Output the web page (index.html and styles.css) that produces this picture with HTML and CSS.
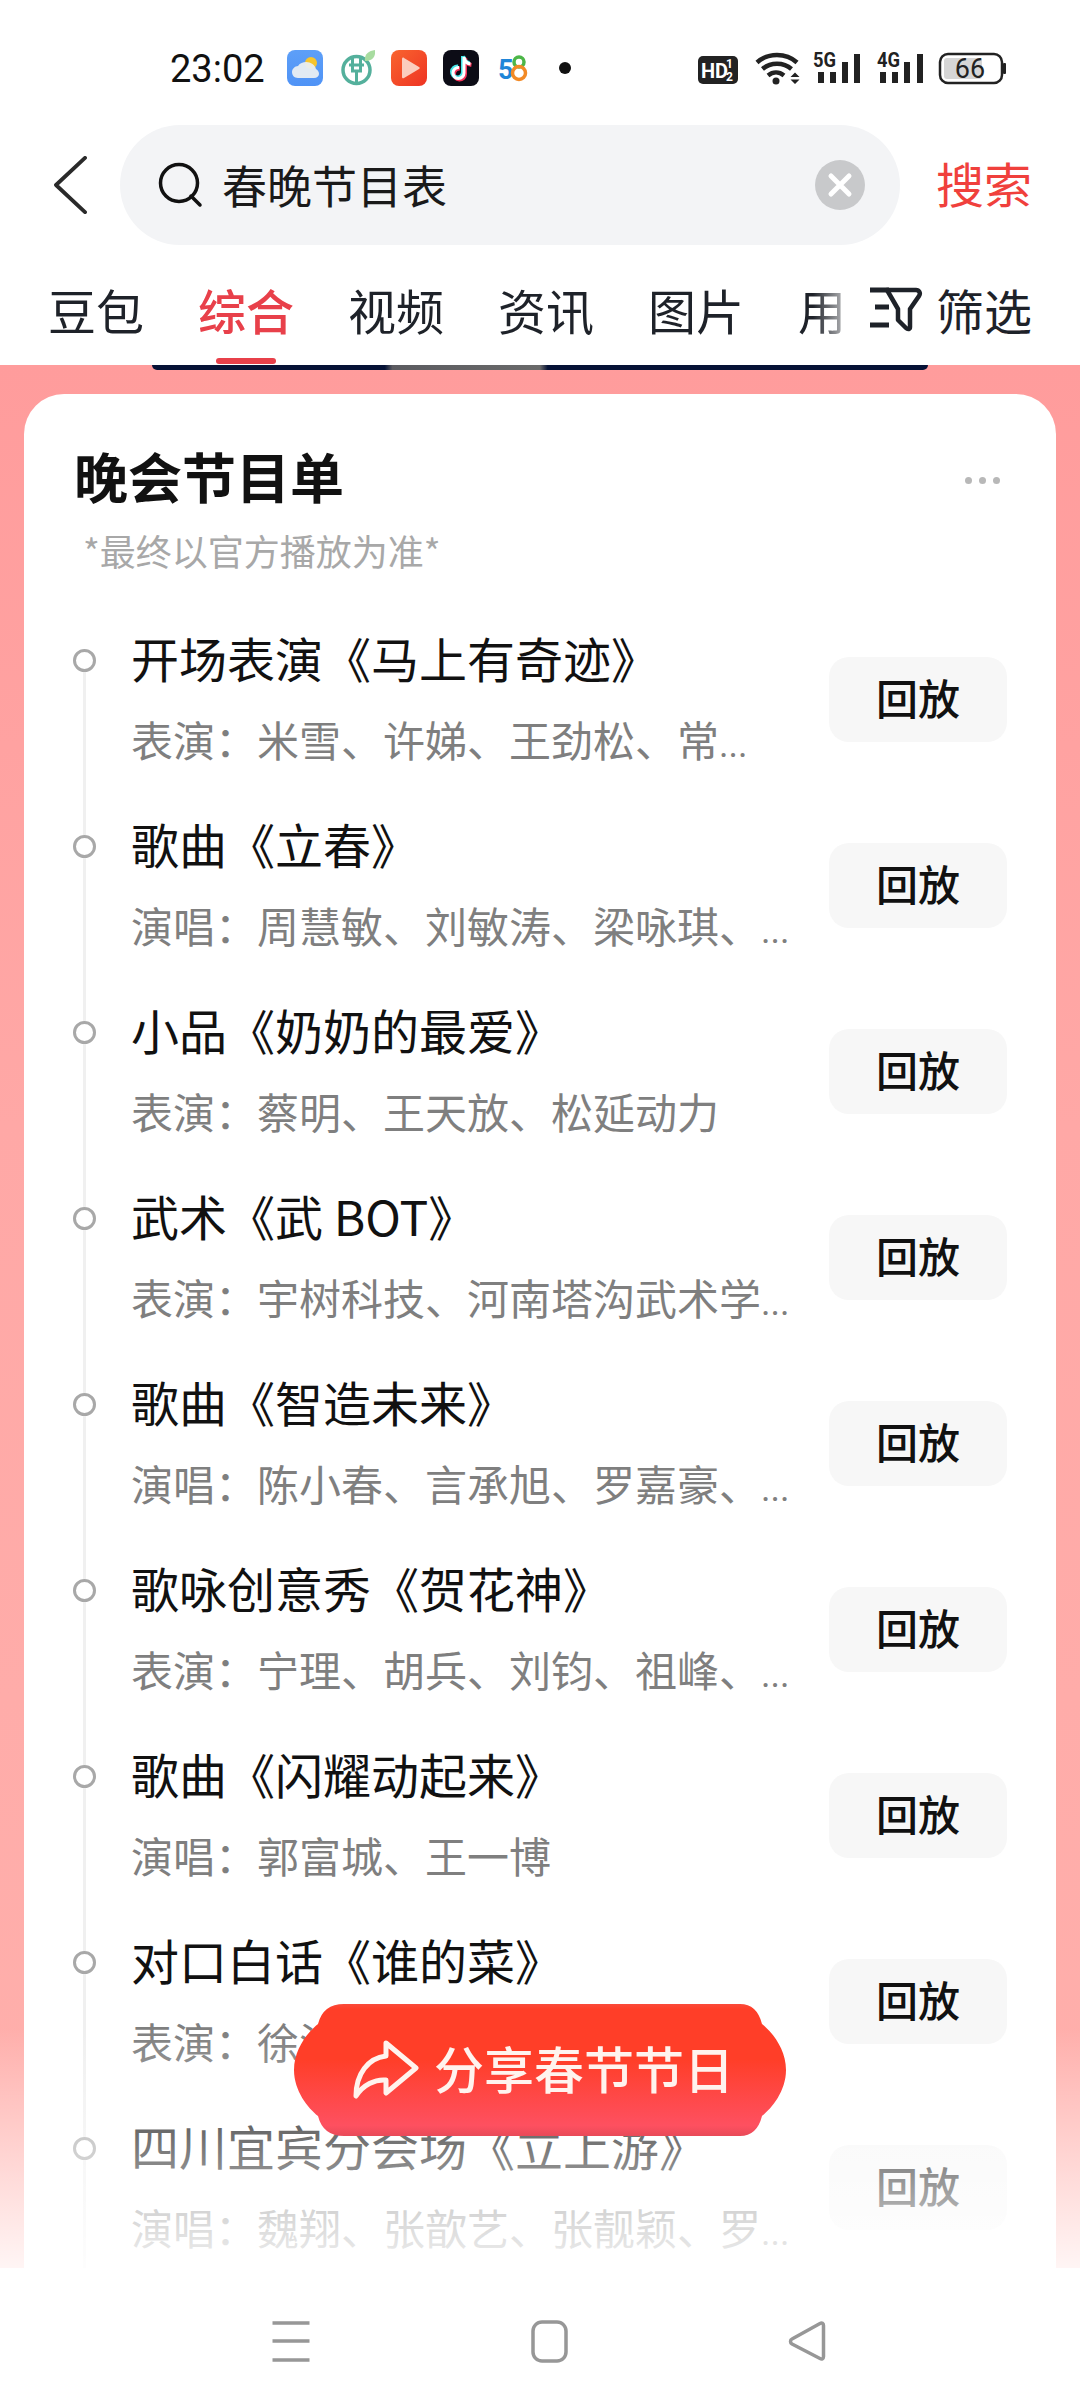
FILE: index.html
```html
<!DOCTYPE html>
<html lang="zh-CN">
<head>
  <meta charset="UTF-8" />
  <meta name="viewport" content="width=device-width, initial-scale=1.0">
  <title>春晚节目表</title>
  <link rel="stylesheet" href="styles.css">
</head>
<body>
  <div class="statusbar">
    <span class="time">23:02</span>
    <svg class="app" viewBox="0 0 36 36">
      <defs><linearGradient id="sky" x1="0" y1="0" x2="0" y2="1"><stop offset="0" stop-color="#5d9ff8"/><stop offset="1" stop-color="#4f93f6"/></linearGradient></defs>
      <rect width="36" height="36" rx="8" fill="url(#sky)"/>
      <circle cx="24" cy="13" r="6" fill="#f7c52e"/>
      <path d="M11 28c-4 0-6-3-6-6s3-6 6-6c2-3 5-4 8-4 5 0 9 3 10 7 2 1 3 3 3 5 0 2-2 4-5 4z" fill="#e9eef2" opacity=".95"/>
    </svg>
    <svg class="app" viewBox="0 0 36 36">
      <circle cx="17.500" cy="20" r="13.500" fill="none" stroke="#54b09c" stroke-width="3.500"/>
      <path d="M13.500 7v14h8V7M17.500 21v13M10 15h15" fill="none" stroke="#54b09c" stroke-width="3"/>
      <path d="M26 11c-1-6 3-10 10-11 1 7-3 11-10 11z" fill="#a8dca0"/>
    </svg>
    <svg class="app" viewBox="0 0 36 36">
      <defs><linearGradient id="vid" x1="0" y1="0" x2="1" y2="1"><stop offset="0" stop-color="#f9652f"/><stop offset="1" stop-color="#ee3323"/></linearGradient></defs>
      <rect width="36" height="36" rx="8" fill="url(#vid)"/>
      <path d="M11 9c0-1 1-2 2-1l15 9c1 .600 1 1.500 0 2l-15 9c-1 .600-2 0-2-1z" fill="#fbcdbe"/>
    </svg>
    <svg class="app" viewBox="0 0 36 36">
      <rect width="36" height="36" rx="8" fill="#0c0c16"/>
      <path d="M21 7v16a5.500 5.500 0 1 1-5-5.500M21 7c.500 4 3 6.500 6.500 7" fill="none" stroke="#f5345a" stroke-width="4" transform="translate(1 1)"/>
      <path d="M21 7v16a5.500 5.500 0 1 1-5-5.500M21 7c.500 4 3 6.500 6.500 7" fill="none" stroke="#43e4e6" stroke-width="4" transform="translate(-1 -1)"/>
      <path d="M21 7v16a5.500 5.500 0 1 1-5-5.500M21 7c.500 4 3 6.500 6.500 7" fill="none" stroke="#fff" stroke-width="3"/>
    </svg>
    <svg class="app" viewBox="0 0 36 36">
      <text x="3" y="29" class="logo-five">5</text>
      <circle cx="24" cy="12" r="5" fill="none" stroke="#4cb648" stroke-width="3.500"/>
      <circle cx="24" cy="23" r="6.500" fill="none" stroke="#f28a26" stroke-width="3.500"/>
    </svg>
    <span class="notice-dot"></span>
    <svg class="sysicons" viewBox="0 0 308 40">
      <rect x="0" y="6" width="40" height="28" rx="5" fill="#222"/>
      <text x="3" y="28" class="sys-hd">HD</text>
      <text x="28" y="18" class="sys-frac">1</text>
      <text x="28" y="31" class="sys-frac">2</text>
      <path d="M59 12.500c11-10 29-10 40 0M64.500 19c8-7 21-7 29 0M70 25.500c5-4 11-4 16 0" fill="none" stroke="#222" stroke-width="4.500"/>
      <circle cx="78" cy="31" r="3.500" fill="#222"/>
      <path d="M97 22.500l4.500 4.500h-9zM92.500 29.500h9L97 34z" fill="#222"/>
      <text x="115" y="17" class="sys-net" textLength="23" lengthAdjust="spacingAndGlyphs">5G</text>
      <path d="M120 22h6v11h-6zM132 22h6v11h-6zM144 12h6v21h-6zM156 4h6v29h-6z" fill="#222"/>
      <text x="179" y="17" class="sys-net" textLength="23" lengthAdjust="spacingAndGlyphs">4G</text>
      <path d="M182 22h6v11h-6zM194 22h6v11h-6zM206 12h6v21h-6zM219 4h6v29h-6z" fill="#222"/>
      <rect x="242" y="4" width="62" height="29" rx="8" fill="none" stroke="#222" stroke-width="2.500"/>
      <rect x="246" y="8" width="38" height="21" rx="3" fill="#d6d6d6"/>
      <text x="272" y="28" class="sys-batt" text-anchor="middle">66</text>
      <rect x="305" y="13" width="3" height="11" rx="1" fill="#222"/>
    </svg>
  </div>

  <div class="searchrow">
    <svg class="back" viewBox="0 0 34 60"><path d="M32 2L2 30l30 28" fill="none" stroke="#2a2a2a" stroke-width="4" stroke-linecap="round" stroke-linejoin="round"/></svg>
    <div class="searchbox">
      <svg class="glass" viewBox="0 0 46 46"><circle cx="21" cy="21" r="18.500" fill="none" stroke="#111" stroke-width="3.500"/><path d="M33 34l9 9" stroke="#111" stroke-width="3.500" stroke-linecap="round"/></svg>
      <span class="query">春晚节目表</span>
      <svg class="clear" viewBox="0 0 50 50"><circle cx="25" cy="25" r="25" fill="#c8c9cb"/><path d="M16 16l18 18M34 16L16 34" stroke="#fff" stroke-width="5" stroke-linecap="round"/></svg>
    </div>
    <span class="searchbtn">搜索</span>
  </div>

  <div class="tabbar">
    <div class="tabs">
      <span class="tab">豆包</span>
      <span class="tab active">综合</span>
      <span class="tab">视频</span>
      <span class="tab">资讯</span>
      <span class="tab">图片</span>
      <span class="tab">用</span>
    </div>
    <svg class="filter-icon" viewBox="0 0 54 46">
      <path d="M1 3h19M6 20h14M1 38h19" stroke="#1e2229" stroke-width="5"/>
      <path d="M18 3H47c3 0 5 3 3 6L41 22V40c0 2-2 3-4 1L29 33V22z" fill="none" stroke="#1e2229" stroke-width="4.500" stroke-linejoin="round"/>
    </svg>
    <span class="filter-text">筛选</span>
  </div>

  <div class="main">
    <div class="banner-edge"></div>
    <div class="card">
      <div class="card-head">
        <div class="card-title">晚会节目单</div>
        <div class="more-dots"><span></span><span></span><span></span></div>
      </div>
      <div class="card-note">*最终以官方播放为准*</div>
      <div class="list">
        <div class="row">
          <div class="mark"><i class="dot"></i><i class="line"></i></div>
          <div class="info"><div class="name">开场表演《马上有奇迹》</div><div class="cast">表演：米雪、许娣、王劲松、常<span class="cut">...</span></div></div>
          <div class="replay">回放</div>
        </div>
        <div class="row">
          <div class="mark"><i class="dot"></i><i class="line"></i></div>
          <div class="info"><div class="name">歌曲《立春》</div><div class="cast">演唱：周慧敏、刘敏涛、梁咏琪、<span class="cut">...</span></div></div>
          <div class="replay">回放</div>
        </div>
        <div class="row">
          <div class="mark"><i class="dot"></i><i class="line"></i></div>
          <div class="info"><div class="name">小品《奶奶的最爱》</div><div class="cast">表演：蔡明、王天放、松延动力</div></div>
          <div class="replay">回放</div>
        </div>
        <div class="row">
          <div class="mark"><i class="dot"></i><i class="line"></i></div>
          <div class="info"><div class="name">武术《武 BOT》</div><div class="cast">表演：宇树科技、河南塔沟武术学<span class="cut">...</span></div></div>
          <div class="replay">回放</div>
        </div>
        <div class="row">
          <div class="mark"><i class="dot"></i><i class="line"></i></div>
          <div class="info"><div class="name">歌曲《智造未来》</div><div class="cast">演唱：陈小春、言承旭、罗嘉豪、<span class="cut">...</span></div></div>
          <div class="replay">回放</div>
        </div>
        <div class="row">
          <div class="mark"><i class="dot"></i><i class="line"></i></div>
          <div class="info"><div class="name">歌咏创意秀《贺花神》</div><div class="cast">表演：宁理、胡兵、刘钧、祖峰、<span class="cut">...</span></div></div>
          <div class="replay">回放</div>
        </div>
        <div class="row">
          <div class="mark"><i class="dot"></i><i class="line"></i></div>
          <div class="info"><div class="name">歌曲《闪耀动起来》</div><div class="cast">演唱：郭富城、王一博</div></div>
          <div class="replay">回放</div>
        </div>
        <div class="row">
          <div class="mark"><i class="dot"></i><i class="line"></i></div>
          <div class="info"><div class="name">对口白话《谁的菜》</div><div class="cast">表演：徐浩</div></div>
          <div class="replay">回放</div>
        </div>
        <div class="row">
          <div class="mark"><i class="dot"></i><i class="line"></i></div>
          <div class="info"><div class="name">四川宜宾分会场《立上游》</div><div class="cast">演唱：魏翔、张歆艺、张靓颖、罗<span class="cut">...</span></div></div>
          <div class="replay">回放</div>
        </div>
      </div>
    </div>
    <div class="fade"></div>
    <div class="share">
      <svg class="share-icon" viewBox="0 0 66 60"><path d="M33 3l30 25-30 25V40C22 39 10 45 3 56 3 34 15 18 33 16z" fill="none" stroke="#fff3ee" stroke-width="5" stroke-linejoin="round"/></svg>
      <span class="share-text">分享春节节日</span>
    </div>
  </div>

  <div class="navbar">
    <svg class="nav-icon" viewBox="0 0 44 44"><path d="M3.500 3h37M3.500 21h37M3.500 40h37" stroke="#979797" stroke-width="3.500"/></svg>
    <svg class="nav-icon" viewBox="0 0 44 44"><rect x="6" y="2" width="33" height="39" rx="9" fill="none" stroke="#979797" stroke-width="3.500"/></svg>
    <svg class="nav-icon" viewBox="0 0 44 44"><path d="M35 3.500c2-1 3.500 0 3.500 2v31c0 2-1.500 3-3.500 2L7 24c-2-1.200-2-4 0-5z" fill="none" stroke="#979797" stroke-width="3.500" stroke-linejoin="round"/></svg>
  </div>
</body>
</html>
```

FILE: styles.css
```css
* { box-sizing: border-box; }
body { margin: 0; width: 1080px; height: 2400px; overflow: hidden; display: flex; flex-direction: column; background: #fff; font-family: "Noto Sans CJK SC", "Noto Sans", sans-serif; color: #111; }

.statusbar { height: 125px; flex: none; display: flex; align-items: flex-start; padding: 50px 74px 0 170px; }
.time { font-family: Roboto, sans-serif; font-size: 38px; line-height: 38px; width: 93px; margin-right: 24px; color: #111; }
.app { width: 36px; height: 36px; margin-right: 16px; flex: none; }
.logo-five { font-family: Roboto, sans-serif; font-weight: 700; font-size: 27px; fill: #1f86d8; }
.notice-dot { width: 12px; height: 12px; border-radius: 50%; background: #111; margin: 12px 0 0 12px; }
.sysicons { width: 308px; height: 40px; margin-left: auto; }
.sys-hd { font-family: Roboto, sans-serif; font-weight: 700; font-size: 20px; fill: #fff; }
.sys-frac { font-family: Roboto, sans-serif; font-weight: 700; font-size: 12px; fill: #fff; }
.sys-net { font-family: Roboto, sans-serif; font-weight: 700; font-size: 20px; fill: #222; }
.sys-batt { font-family: Roboto, sans-serif; font-size: 27px; fill: #222; }

.searchrow { height: 120px; flex: none; display: flex; align-items: center; padding-left: 54px; }
.back { width: 33px; height: 58px; flex: none; margin-right: 33px; }
.searchbox { width: 780px; height: 120px; border-radius: 60px; background: #f3f4f6; display: flex; align-items: center; padding: 0 35px 0 38px; }
.glass { width: 46px; height: 46px; flex: none; margin-right: 18px; }
.query { font-size: 45px; line-height: 60px; color: #1a1a1a; flex: 1; }
.clear { width: 50px; height: 50px; flex: none; }
.searchbtn { font-size: 48px; line-height: 60px; color: #f0403c; margin: -6px 0 0 36px; }

.tabbar { height: 120px; flex: none; display: flex; align-items: center; padding: 8px 0 0 48px; background: #fff; position: relative; }
.tabs { width: 802px; display: flex; gap: 54px; flex: none; -webkit-mask-image: linear-gradient(to right, #000 765px, rgba(0,0,0,.25) 800px); mask-image: linear-gradient(to right, #000 765px, rgba(0,0,0,.25) 800px); }
.tab { font-size: 48px; line-height: 60px; color: #1e2229; flex: none; }
.tab.active { color: #e8404a; font-weight: 500; }
.tabbar::after { content: ""; position: absolute; left: 216px; top: 113px; width: 60px; height: 6px; border-radius: 3px; background: #e8404a; }
.filter-icon { width: 54px; height: 46px; flex: none; margin: 2px 0 0 19px; }
.filter-text { font-size: 48px; line-height: 60px; color: #1e2229; margin-left: 13px; }

.main { flex: 1; min-height: 0; position: relative; overflow: hidden; background: linear-gradient(#ff9c9c, #ffa8a6 40%, #ffb0ac); }
.banner-edge { height: 5px; margin: 0 152px; border-radius: 0 0 10px 10px; background: linear-gradient(to right, #061236 30%, #5b5b60 31%, #6a6a6a 50%, #061236 51%); }
.card { margin: 24px 24px 0; border-radius: 40px 40px 0 0; background: #fff; padding: 49px 49px 0; height: 1900px; }
.card-head { display: flex; justify-content: space-between; align-items: center; height: 74px; }
.card-title { font-size: 54px; line-height: 74px; font-weight: 700; color: #111; margin: -8px 0 0 1px; }
.more-dots { display: flex; gap: 7px; margin-right: 7px; }
.more-dots span { width: 7px; height: 7px; border-radius: 50%; background: #b8b8b8; }
.card-note { font-size: 36px; line-height: 46px; color: #a8a8a8; margin: 10px 0 0 10px; }
.list { margin-top: 57px; }

.row { display: flex; align-items: stretch; height: 186px; }
.mark { width: 23px; flex: none; display: flex; flex-direction: column; align-items: center; margin-right: 35px; }
.dot { width: 23px; height: 23px; border-radius: 50%; border: 3px solid #a8a8a8; margin-top: 19px; flex: none; }
.line { width: 3px; flex: 1; margin-bottom: -19px; background: #f0f0f0; }
.info { flex: 1; min-width: 0; }
.name { font-size: 48px; line-height: 62px; margin-top: -4px; color: #111; white-space: nowrap; }
.cast { font-size: 42px; line-height: 56px; margin-top: 23px; color: #7f7f7f; white-space: nowrap; }
.cut { font-family: Roboto, sans-serif; font-size: 36px; }
.replay { width: 178px; height: 85px; flex: none; margin-top: 27px; border-radius: 20px; background: #f7f7f7; font-size: 42px; font-weight: 500; line-height: 79px; text-align: center; color: #111; }

.fade { position: absolute; left: 0; right: 0; bottom: 0; height: 240px; background: linear-gradient(rgba(255,255,255,0), rgba(255,255,255,.88)); }
.share { position: absolute; left: 294px; top: 1639px; width: 492px; height: 132px; display: flex; align-items: center; padding-left: 59px; background: linear-gradient(#fa4a3a, #ff3e28 4%, #ff3e28 42%, #fe5060 92%, #e84a58); clip-path: path("M50 0L446 0Q463 0 468 20C478 28 492 45 492 66C492 87 478 104 468 112Q463 132 446 132L50 132Q29 132 24 112C14 104 0 87 0 66C0 45 14 28 24 20Q29 0 50 0Z"); }
.share-icon { width: 66px; height: 60px; flex: none; margin-right: 15px; }
.share-text { font-size: 50px; line-height: 60px; margin-top: -6px; color: #fff3ee; font-weight: 500; }

.navbar { height: 132px; flex: none; display: flex; align-items: flex-start; padding: 52px 0 0 269px; gap: 214px; background: #fff; }
.nav-icon { width: 44px; height: 44px; flex: none; }
```
